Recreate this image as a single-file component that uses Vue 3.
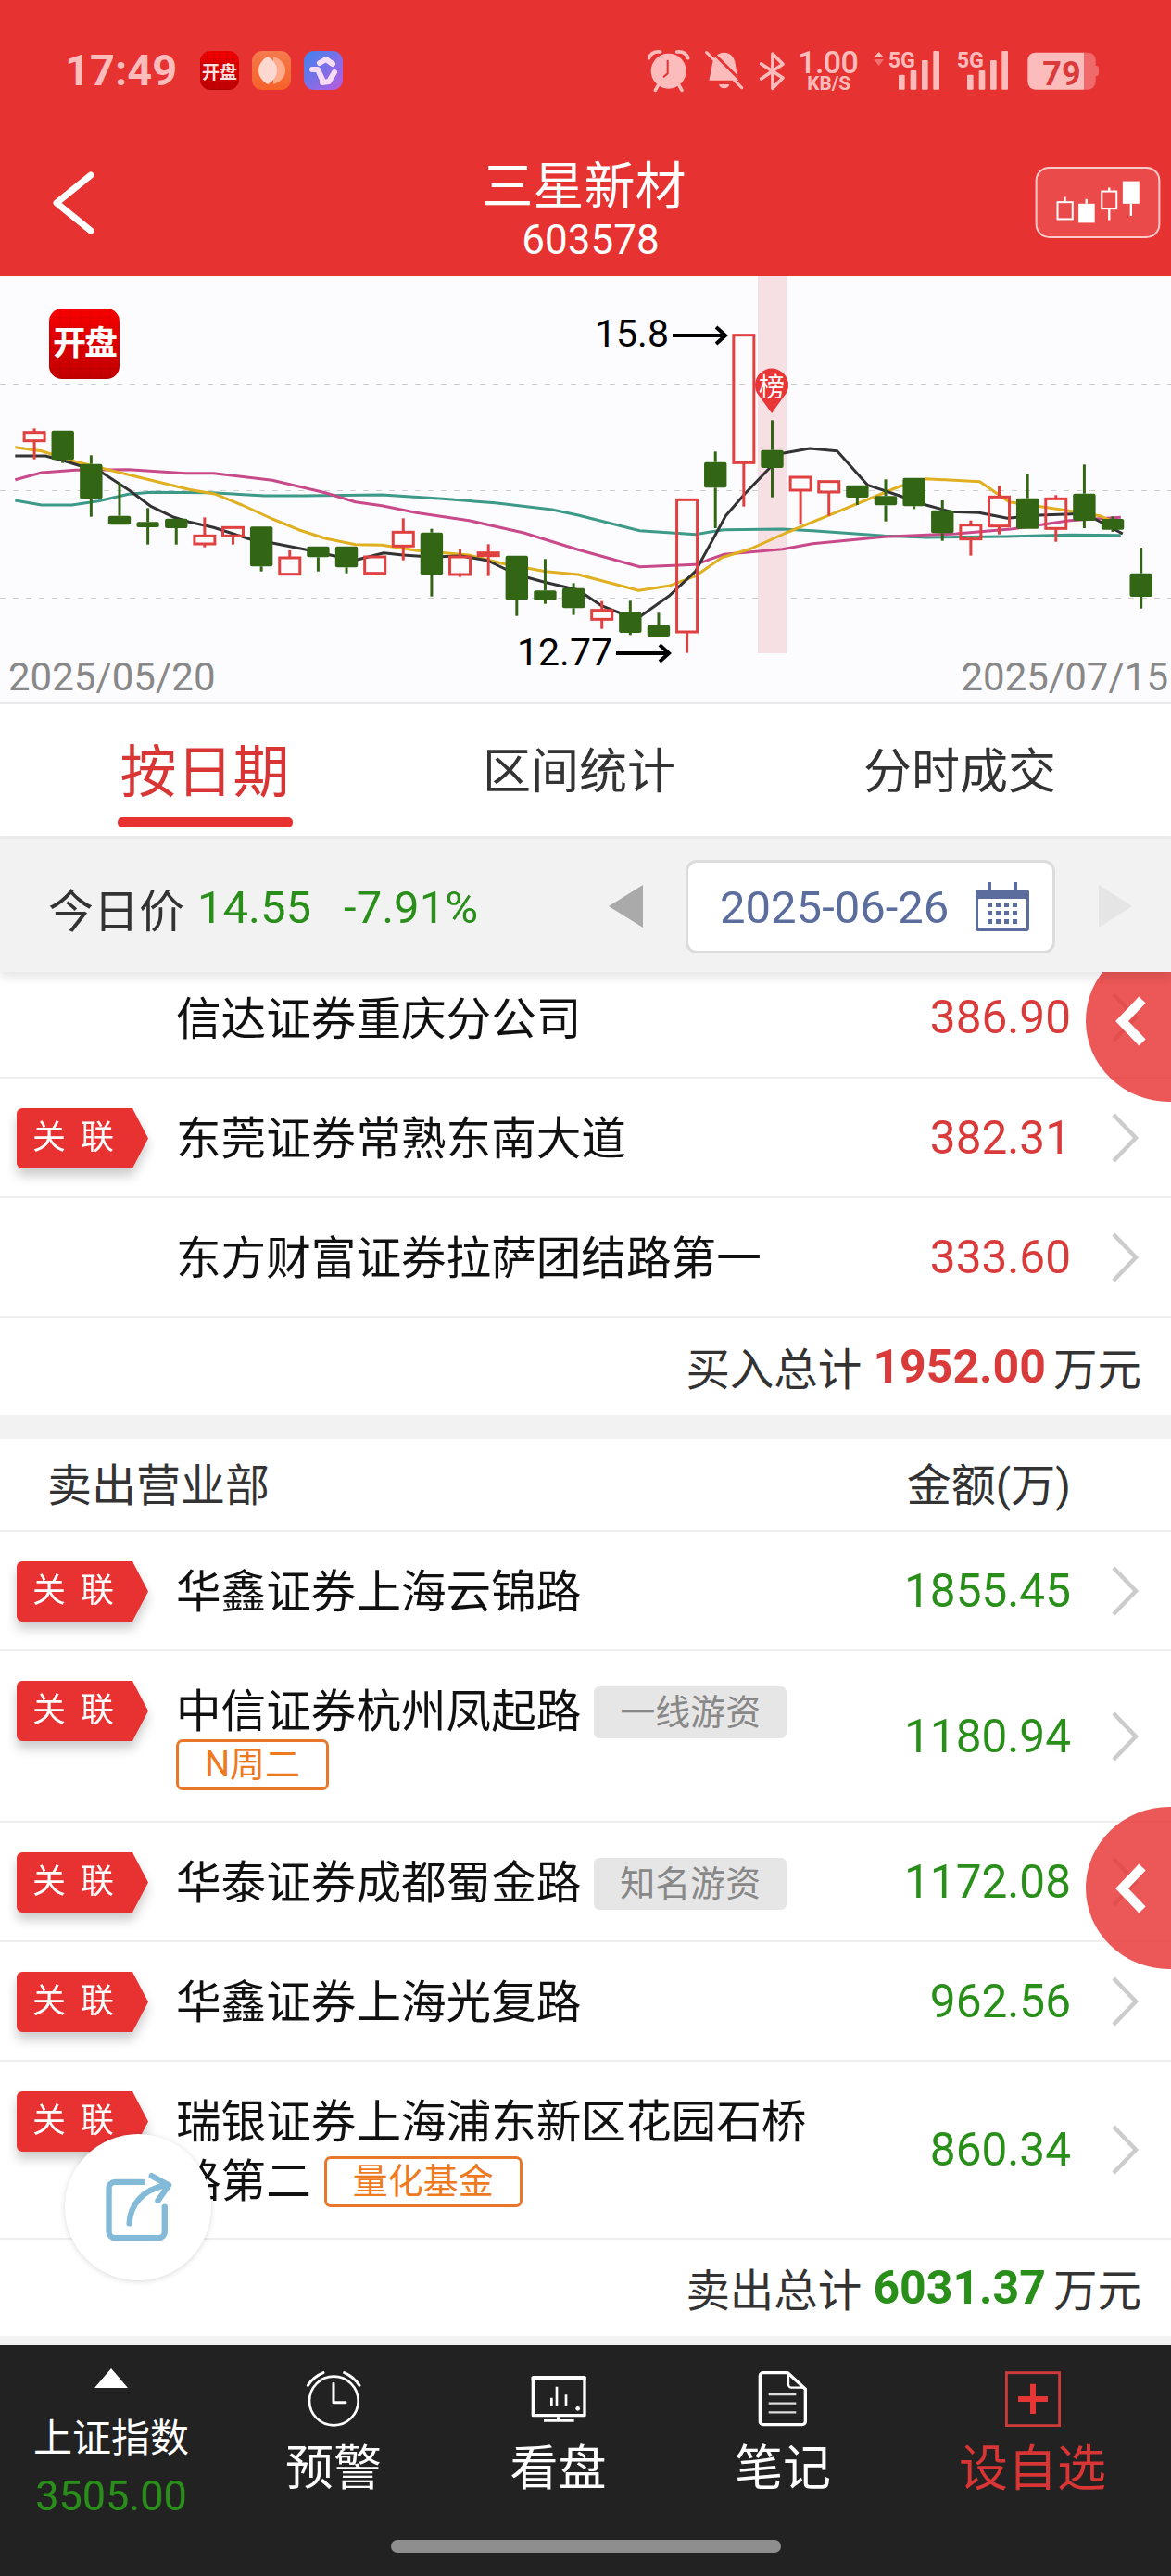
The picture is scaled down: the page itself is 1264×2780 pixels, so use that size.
<template>
  <div class="page">
    <header class="top">
      <div class="status">
        <div class="status-left">
          <span class="time">17:49</span>
          <span class="app app-open">开盘</span>
          <span class="app app-orange">
            <svg width="42" height="42" viewBox="0 0 42 42">
              <path d="M23 6c9 3 13 9 13 15s-4 12-13 15z" fill="#ffab8c" />
              <path d="M17 6c7 4 10 10 10 15s-3 11-10 15c-7-4-10-10-10-15S10 10 17 6z" fill="#fdd8d0" />
            </svg>
          </span>
          <span class="app app-purple">
            <svg width="42" height="42" viewBox="0 0 42 42">
              <path d="M17 13l7-4 7 5M9 20h6l5 11M33 23l-6 10-7 1" fill="none" stroke="#f7dcf5" stroke-width="6" stroke-linecap="round" stroke-linejoin="round" />
            </svg>
          </span>
        </div>
        <svg class="status-right" width="510" height="70" viewBox="0 0 1530 210">
          <g fill="#fcbcbc">
            <circle cx="95" cy="110" r="57" />
            <path d="M32 68Q40 45 68 48M158 68Q150 45 122 48M62 155l-10 17M128 155l10 17" fill="none" stroke="#fcbcbc" stroke-width="11" stroke-linecap="round" />
            <path d="M275 50c24 0 36 20 38 48l9 42H226l9-42c2-28 16-48 40-48zM258 153h34q-4 13-17 13t-17-13z" />
          </g>
          <path d="M92 75v43l-14 12" fill="none" stroke="#e73232" stroke-width="6" />
          <path d="M227 39l114 114" stroke="#e73232" stroke-width="9" />
          <path d="M218 50l114 114" stroke="#fcbcbc" stroke-width="9" stroke-linecap="round" />
          <path d="M395 87l70 45-33 34V54l33 34-70 47" fill="none" stroke="#fcbcbc" stroke-width="11" stroke-linejoin="round" stroke-linecap="round" />
          <text x="611" y="118" class="st-speed">1.00</text>
          <text x="614" y="170" class="st-unit">KB/S</text>
          <path d="M776 48l16 17h-32z" fill="#fcbcbc" />
          <path d="M776 93l16-21h-32z" fill="#f07070" />
          <text x="806" y="98" class="st-5g">5G</text>
          <text x="1028" y="98" class="st-5g">5G</text>
          <g fill="#fcbcbc">
            <template v-for="off in [0, 222]" :key="off">
              <rect v-for="b in signalBars" :key="b.x" :x="b.x + off" :y="b.y" width="20" :height="170 - b.y" rx="3" />
            </template>
            <path d="M1440 50h-157a25 25 0 0 0-25 25v70a25 25 0 0 0 25 25h157z" />
          </g>
          <path d="M1440 50h13a25 25 0 0 1 25 25v18a10 10 0 0 1 10 10v14a10 10 0 0 1-10 10v18a25 25 0 0 1-25 25h-13z" fill="#ef6b6b" />
          <text x="1368" y="155" class="st-batt">79</text>
        </svg>
      </div>
      <div class="nav">
        <svg class="back" width="46" height="68" viewBox="0 0 46 68">
          <path d="M42 4L5 34l37 30" fill="none" stroke="#fff" stroke-width="7" stroke-linecap="round" stroke-linejoin="round" />
        </svg>
        <div class="title">
          <div class="name">三星新材</div>
          <div class="code">603578</div>
        </div>
        <svg class="kbtn" width="136" height="77" viewBox="52 30 406 232">
          <rect x="55" y="33" width="400" height="226" rx="42" fill="#eb4a4a" stroke="#fcc9c9" stroke-width="6" />
          <path d="M148 128v15M218 135v15M292 98v10M292 168v35M363 150v40" stroke="#fff" stroke-width="7" />
          <rect x="124" y="145" width="49" height="55" fill="none" stroke="#fff" stroke-width="6" />
          <rect x="192" y="150" width="53" height="62" fill="#fff" />
          <rect x="268" y="110" width="48" height="56" fill="none" stroke="#fff" stroke-width="6" />
          <rect x="336" y="77" width="54" height="73" fill="#fff" />
        </svg>
      </div>
    </header>

    <section class="chart">
      <svg class="kline" width="1264" height="462" viewBox="0 0 1264 462">
        <line v-for="g in gridLines" :key="g" x1="0" x2="1264" :y1="g" :y2="g" stroke="#cfcfcf" stroke-width="1" stroke-dasharray="6 8" />
        <rect x="818" y="0" width="31" height="407" fill="#f7e0e4" />
        <polyline v-for="m in maLines" :key="m.color" :points="m.points" fill="none" :stroke="m.color" stroke-width="3" stroke-linejoin="round" />
        <g v-for="c in candles" :key="c.i">
          <line :x1="c.x" :x2="c.x" :y1="c.wickTop" :y2="c.bodyTop" :stroke="c.color" stroke-width="3" />
          <line :x1="c.x" :x2="c.x" :y1="c.bodyBottom" :y2="c.wickBottom" :stroke="c.color" stroke-width="3" />
          <rect v-if="c.up" :x="c.x - 11" :y="c.bodyTop" width="22" :height="c.bodyBottom - c.bodyTop" fill="none" :stroke="c.color" stroke-width="3" />
          <rect v-else :x="c.x - 12.2" :y="c.bodyTop" width="24.4" :height="c.bodyBottom - c.bodyTop" rx="2" :fill="c.color" />
        </g>
        <text x="642" y="76" class="price">15.8</text>
        <path d="M726 64h56M773 55l10 9-10 9" fill="none" stroke="#000" stroke-width="4" />
        <text x="558" y="420" class="price">12.77</text>
        <path d="M665 407h56M712 398l10 9-10 9" fill="none" stroke="#000" stroke-width="4" />
        <path d="M833 148l-13-18a18 18 0 1 1 26 0z" fill="#e83535" />
        <text x="833" y="130" class="pin">榜</text>
        <text x="9" y="447" class="axis">2025/05/20</text>
        <text x="1261" y="447" class="axis end">2025/07/15</text>
      </svg>
      <div class="logo">开盘</div>
    </section>

    <nav class="tabs">
      <div v-for="(t, i) in tabs" :key="t" class="tab" :class="{ active: i === 0 }">
        <span>{{ t }}</span>
        <i v-if="i === 0"></i>
      </div>
    </nav>

    <div class="pricebar">
      <span class="label">今日价</span>
      <span class="green p1">14.55</span>
      <span class="green p2">-7.91%</span>
      <div class="picker">
        <i class="tri left"></i>
        <div class="datebox">
          <span>2025-06-26</span>
          <svg width="58" height="53" viewBox="0 0 58 53">
            <path d="M3 8h52a3 3 0 0 1 3 3v39a3 3 0 0 1-3 3H3a3 3 0 0 1-3-3V11a3 3 0 0 1 3-3z" fill="#5a6d9c" />
            <rect x="3" y="18" width="52" height="32" rx="1" fill="#fff" />
            <path d="M15 0v13M43 0v13" stroke="#5a6d9c" stroke-width="4" />
            <g fill="#5a6d9c">
              <template v-for="r in 3" :key="r">
                <rect v-for="q in 4" :key="q" :x="4 + q * 9" :y="13 + r * 9" width="5" height="5" />
              </template>
            </g>
          </svg>
        </div>
        <i class="tri right"></i>
      </div>
    </div>

    <main class="list">
      <div class="rows-clip">
        <div v-for="r in buyRows" :key="r.name" class="row">
          <div class="tagcol"><div v-if="r.linked" class="badge-wrap"><div class="badge">关 联</div></div></div>
          <div class="name-cell"><span class="bname">{{ r.name }}</span></div>
          <span class="amount red">{{ r.amount }}</span>
          <svg class="chev" width="34" height="54" viewBox="0 0 34 54"><path d="M5 2l24 25L5 52" fill="none" stroke="#cccccc" stroke-width="4.5" /></svg>
        </div>
      </div>
      <div class="total buy">买入总计<b class="red">1952.00</b>万元</div>
      <div class="gap"></div>

      <div class="list-head">
        <span>卖出营业部</span>
        <span>金额(万)</span>
      </div>
      <div v-for="r in sellRows" :key="r.name" class="row" :class="r.size">
        <div class="tagcol"><div class="badge-wrap"><div class="badge">关 联</div></div></div>
        <div class="name-cell">
          <span class="bname">{{ r.name }}</span>
          <span v-if="r.grey" class="tag-grey">{{ r.grey }}</span>
          <span v-if="r.orange" class="tag-orange">{{ r.orange }}</span>
        </div>
        <span class="amount green">{{ r.amount }}</span>
        <svg class="chev" width="34" height="54" viewBox="0 0 34 54"><path d="M5 2l24 25L5 52" fill="none" stroke="#cccccc" stroke-width="4.5" /></svg>
      </div>
      <div class="total sell">卖出总计<b class="green">6031.37</b>万元</div>
    </main>

    <footer class="bar">
      <div class="item index">
        <i class="up"></i>
        <span class="idx-name">上证指数</span>
        <span class="idx-num">3505.00</span>
      </div>
      <div class="item">
        <svg width="60" height="60" viewBox="93 42 180 180">
          <circle cx="184" cy="138" r="79" fill="none" stroke="#fff" stroke-width="8" />
          <path d="M183 82v61h39" fill="none" stroke="#fff" stroke-width="9" stroke-linecap="round" stroke-linejoin="round" />
          <path d="M100 88Q118 60 150 47M267 88Q248 60 218 47" fill="none" stroke="#fff" stroke-width="9" stroke-linecap="round" />
        </svg>
        <span>预警</span>
      </div>
      <div class="item">
        <svg width="60" height="60" viewBox="818 42 180 180">
          <path d="M825 62h167v123H825z" fill="none" stroke="#fff" stroke-width="10" stroke-linejoin="round" />
          <path d="M820 60h177v12H820zM902 190h12v10h-12zM860 198h98v8h-98z" fill="#fff" />
          <path d="M885 128v27M902 92v63M932 118v37" stroke="#fff" stroke-width="8" />
          <circle cx="970" cy="163" r="7" fill="#fff" />
        </svg>
        <span>看盘</span>
      </div>
      <div class="item">
        <svg width="60" height="60" viewBox="74 42 180 180">
          <path d="M100 47h80l57 53v105a10 10 0 0 1-10 10H100a10 10 0 0 1-10-10V57a10 10 0 0 1 10-10z" fill="none" stroke="#fff" stroke-width="10" stroke-linejoin="round" />
          <path d="M182 50v35a10 10 0 0 0 10 10h43" fill="none" stroke="#fff" stroke-width="7" />
          <path d="M118 117h89M118 146h89M118 175h89" stroke="#ddd" stroke-width="7" />
        </svg>
        <span>笔记</span>
      </div>
      <div class="item add">
        <svg width="60" height="60" viewBox="885 42 180 180">
          <rect x="889" y="47" width="172" height="171" fill="none" stroke="#cc3a3a" stroke-width="9" />
          <path d="M975 83v97M927 132h96" stroke="#e53535" stroke-width="18" />
        </svg>
        <span>设自选</span>
      </div>
      <i class="home"></i>
    </footer>

    <div class="fold fold-a"><svg width="38" height="56" viewBox="0 0 38 56"><path d="M31 5L9 28l22 23" fill="none" stroke="#fff" stroke-width="10" /></svg></div>
    <div class="fold fold-b"><svg width="38" height="56" viewBox="0 0 38 56"><path d="M31 5L9 28l22 23" fill="none" stroke="#fff" stroke-width="10" /></svg></div>

    <div class="share">
      <svg width="158" height="158" viewBox="30 10 472 472">
        <path d="M280 165H192a20 20 0 0 0-20 20v140a20 20 0 0 0 20 20h140a20 20 0 0 0 20-20v-80" fill="none" stroke="#83bad8" stroke-width="19" stroke-linecap="round" />
        <path d="M238 298c2-58 42-108 117-123M310 145l55 30-35 50" fill="none" stroke="#83bad8" stroke-width="19" stroke-linecap="round" stroke-linejoin="round" />
      </svg>
    </div>
  </div>
</template>

<script setup>
const tabs = ['按日期', '区间统计', '分时成交']

const signalBars = [
  { x: 840, y: 122 },
  { x: 878, y: 108 },
  { x: 915, y: 75 },
  { x: 952, y: 45 },
]

const gridLines = [116.5, 231.5, 347.5]

// values read off the reference: up, body top, body bottom, wick top, wick bottom (y in 3x)
const raw = [
  [1, 500, 527, 487, 587], [0, 494, 589, 494, 599], [0, 602, 715, 574, 773], [0, 770, 799, 665, 799],
  [0, 790, 807, 745, 863], [0, 779, 810, 779, 863], [1, 835, 861, 775, 872], [1, 808, 835, 808, 863],
  [0, 805, 934, 805, 950], [1, 906, 959, 882, 959], [0, 869, 904, 869, 950], [0, 869, 937, 869, 956],
  [1, 903, 956, 903, 961], [1, 823, 868, 778, 914], [0, 824, 961, 812, 1031], [1, 903, 960, 877, 968],
  [1, 890, 899, 862, 965], [0, 899, 1042, 899, 1094], [0, 1012, 1044, 910, 1055], [0, 1004, 1069, 988, 1091],
  [1, 1076, 1105, 1046, 1136], [0, 1082, 1149, 1045, 1156], [0, 1124, 1161, 1084, 1161], [1, 718, 1146, 718, 1214],
  [0, 596, 679, 562, 810], [1, 185, 598, 185, 740], [0, 557, 615, 460, 710], [1, 645, 687, 645, 795],
  [1, 659, 693, 659, 770], [0, 671, 711, 671, 735], [0, 706, 736, 652, 788], [0, 647, 739, 647, 748],
  [0, 752, 826, 720, 851], [1, 800, 845, 785, 899], [1, 709, 803, 673, 830], [0, 713, 812, 633, 812],
  [1, 715, 811, 703, 854], [0, 698, 786, 604, 810], [0, 780, 815, 772, 822], [0, 956, 1032, 873, 1070],
]

const toY = (z) => z / 3 + 2
const toX = (z) => z / 2.45

const candles = raw.map((c, i) => ({
  i,
  x: 37.1 + 30.63 * i,
  up: c[0] === 1,
  color: c[0] === 1 ? '#e04040' : '#336614',
  bodyTop: toY(c[1]),
  bodyBottom: toY(c[2]),
  wickTop: toY(c[3]),
  wickBottom: toY(c[4]),
}))

const line = (color, pts) => ({
  color,
  points: pts.map((p) => `${toX(p[0]).toFixed(1)},${toY(p[1]).toFixed(1)}`).join(' '),
})

const maLines = [
  line('#3d9a88', [[40, 720], [110, 735], [190, 735], [260, 722], [340, 700], [400, 694], [560, 695], [700, 705], [800, 705], [1010, 702], [1170, 715], [1310, 728], [1460, 750], [1529, 768], [1692, 818], [1839, 830], [1914, 815], [2069, 813], [2149, 818], [2339, 835], [2449, 840], [2659, 837], [2829, 832], [2964, 833]]),
  line('#c84a8a', [[40, 653], [110, 630], [200, 622], [340, 620], [490, 632], [565, 632], [720, 655], [860, 695], [940, 725], [1010, 737], [1100, 760], [1240, 785], [1385, 825], [1529, 880], [1692, 935], [1839, 928], [1914, 895], [2069, 878], [2149, 860], [2339, 838], [2529, 828], [2679, 812], [2829, 785], [2964, 775]]),
  line('#e0b020', [[40, 548], [110, 560], [200, 595], [350, 640], [500, 685], [570, 700], [640, 735], [720, 780], [790, 815], [860, 843], [940, 863], [1010, 865], [1100, 882], [1240, 897], [1330, 925], [1442, 950], [1529, 960], [1689, 1012], [1769, 997], [1839, 965], [1909, 905], [1989, 875], [2079, 825], [2189, 770], [2379, 675], [2449, 650], [2591, 659], [2669, 725], [2819, 752], [2909, 770], [2964, 800]]),
  line('#333333', [[40, 576], [120, 576], [165, 590], [270, 630], [345, 690], [400, 740], [460, 775], [500, 790], [565, 808], [660, 845], [720, 858], [810, 880], [885, 900], [945, 912], [1015, 890], [1065, 897], [1140, 903], [1220, 900], [1290, 915], [1366, 960], [1440, 985], [1529, 1010], [1589, 1060], [1667, 1098], [1694, 1095], [1769, 1030], [1839, 950], [1919, 770], [1969, 700], [2043, 605], [2069, 568], [2141, 552], [2214, 560], [2294, 670], [2379, 705], [2449, 735], [2514, 757], [2589, 760], [2664, 778], [2749, 768], [2869, 763], [2969, 828]]),
]

const buyRows = [
  { name: '信达证券重庆分公司', amount: '386.90', linked: false },
  { name: '东莞证券常熟东南大道', amount: '382.31', linked: true },
  { name: '东方财富证券拉萨团结路第一', amount: '333.60', linked: false },
]

const sellRows = [
  { name: '华鑫证券上海云锦路', amount: '1855.45' },
  { name: '中信证券杭州凤起路', amount: '1180.94', grey: '一线游资', orange: 'N周二', size: 'tall-a' },
  { name: '华泰证券成都蜀金路', amount: '1172.08', grey: '知名游资' },
  { name: '华鑫证券上海光复路', amount: '962.56' },
  { name: '瑞银证券上海浦东新区花园石桥路第二', amount: '860.34', orange: '量化基金', size: 'tall-b' },
]
</script>

<style>
html,
body {
  margin: 0;
  background: #fff;
}
</style>

<style scoped>
.page {
  position: relative;
  width: 1264px;
  height: 2780px;
  overflow: hidden;
  background: #fff;
  font-family: Roboto, "Noto Sans CJK SC", sans-serif;
  color: #333;
}

.top {
  height: 298px;
  background: #e73232;
  color: #fff;
}

.status {
  height: 166px;
  display: flex;
  justify-content: space-between;
  align-items: flex-start;
  padding: 54px 64px 0 70px;
  box-sizing: border-box;
  color: #fcbcbc;
}

.status-left {
  display: flex;
  align-items: center;
  height: 44px;
}

.time {
  width: 146px;
  font-size: 47px;
  font-weight: 700;
  line-height: 44px;
}

.app {
  width: 42px;
  height: 42px;
  margin-right: 14px;
  border-radius: 11px;
  overflow: hidden;
  display: flex;
  align-items: center;
  justify-content: center;
}

.app-open {
  background:
    repeating-linear-gradient(0deg, rgba(120, 0, 0, 0.25) 0 1px, transparent 1px 7px),
    repeating-linear-gradient(90deg, rgba(120, 0, 0, 0.25) 0 1px, transparent 1px 7px),
    linear-gradient(#f00000, #c00000);
  color: #fde0e0;
  font-size: 19px;
  font-weight: 700;
  white-space: nowrap;
}

.app-orange {
  background: linear-gradient(#f57a4c, #f6622a);
}

.app-purple {
  background: linear-gradient(135deg, #3e83ee, #b95ce0);
}

.status-right {
  margin-top: -14px;
}

.st-speed,
.st-unit,
.st-5g,
.st-batt {
  font-family: Roboto, sans-serif;
  text-anchor: middle;
  fill: #fcbcbc;
}

.st-speed {
  font-size: 102px;
  font-weight: 500;
  letter-spacing: -2px;
}

.st-unit {
  font-size: 62px;
  font-weight: 700;
}

.st-5g {
  font-size: 70px;
  font-weight: 700;
  text-anchor: start;
}

.st-batt {
  font-size: 108px;
  font-weight: 700;
  fill: #d93a3a;
}

.nav {
  display: grid;
  grid-template-columns: 1fr auto 1fr;
  padding: 0 11px 0 56px;
}

.back {
  margin-top: 19px;
}

.title {
  text-align: center;
}

.name {
  padding-top: 3px;
  font-size: 55px;
  line-height: 64px;
  transform: translateX(-24px);
}

.code {
  font-size: 44px;
  line-height: 52px;
  transform: translateX(-17px);
}

.kbtn {
  justify-self: end;
  margin-top: 14px;
}

.chart {
  position: relative;
  height: 462px;
  background: #fcfcff;
  border-bottom: 2px solid #e9e9e9;
  box-sizing: border-box;
}

.kline {
  display: block;
}

.price {
  font-family: Roboto, sans-serif;
  font-size: 41px;
  fill: #000;
}

.pin {
  font-family: "Noto Sans CJK SC", sans-serif;
  font-size: 28px;
  fill: #fff;
  text-anchor: middle;
}

.axis {
  font-family: Roboto, sans-serif;
  font-size: 42px;
  fill: #888;
}

.axis.end {
  text-anchor: end;
}

.logo {
  position: absolute;
  left: 53px;
  top: 35px;
  width: 76px;
  height: 76px;
  border-radius: 14px;
  background:
    repeating-linear-gradient(0deg, rgba(120, 0, 0, 0.15) 0 1px, transparent 1px 11px),
    repeating-linear-gradient(90deg, rgba(120, 0, 0, 0.15) 0 1px, transparent 1px 11px),
    linear-gradient(#f80000, #c20000);
  color: #fff;
  font-size: 36px;
  font-weight: 700;
  letter-spacing: -2px;
  line-height: 76px;
  text-align: center;
  white-space: nowrap;
}

.tabs {
  display: grid;
  grid-template-columns: 442px 366px 456px;
  height: 145px;
  padding-top: 38px;
  box-sizing: border-box;
  border-bottom: 3px solid #ececec;
}

.tab {
  display: flex;
  flex-direction: column;
  align-items: center;
  font-size: 52px;
  line-height: 72px;
}

.tab.active {
  color: #d93535;
  font-size: 61px;
}

.tab.active i {
  width: 189px;
  height: 11px;
  margin-top: 12px;
  border-radius: 5px;
  background: #e83232;
}

.pricebar {
  position: relative;
  z-index: 3;
  height: 144px;
  display: flex;
  align-items: center;
  padding: 2px 42px 0 52px;
  box-sizing: border-box;
  background: #f2f2f2;
  box-shadow: 0 6px 10px rgba(0, 0, 0, 0.1);
}

.label {
  font-size: 49px;
  padding-top: 2px;
}

.green {
  color: #2a8f1a;
}

.red {
  color: #d93a3a;
}

.p1 {
  margin-left: 14px;
  font-size: 49px;
  padding-top: 2px;
}

.p2 {
  margin-left: 35px;
  font-size: 49px;
  padding-top: 2px;
}

.picker {
  margin-left: auto;
  display: flex;
  align-items: center;
}

.tri {
  width: 0;
  height: 0;
  border-top: 23px solid transparent;
  border-bottom: 23px solid transparent;
}

.tri.left {
  border-right: 37px solid #aaa;
}

.tri.right {
  border-left: 36px solid #e5e5e5;
}

.datebox {
  width: 399px;
  height: 101px;
  margin: 0 47px 0 46px;
  padding: 0 25px 0 34px;
  box-sizing: border-box;
  border: 3px solid #dcdcdc;
  border-radius: 12px;
  background: #fff;
  color: #5a6d9c;
  font-size: 49px;
  display: flex;
  align-items: center;
  justify-content: space-between;
}

.datebox span {
  padding-top: 3px;
}

.rows-clip {
  margin-top: -15px;
}

.list {
  height: 1482px;
  overflow: hidden;
}

.row {
  position: relative;
  height: 129px;
  display: flex;
  align-items: center;
  border-bottom: 2px solid #eeeeee;
  box-sizing: border-box;
  padding-right: 33px;
}

.row.tall-a {
  height: 185px;
}

.row.tall-b {
  height: 192px;
}

.rows-clip .row:first-child {
  height: 130px;
}

.tagcol {
  width: 190px;
  flex: none;
  align-self: flex-start;
  padding: 32px 0 0 18px;
  box-sizing: border-box;
}

.badge-wrap {
  width: 142px;
  filter: drop-shadow(0 8px 6px rgba(0, 0, 0, 0.2));
}

.badge {
  height: 65px;
  border-radius: 6px 0 0 6px;
  background: #e83232;
  color: #fff;
  font-size: 36px;
  word-spacing: 7px;
  line-height: 65px;
  text-align: center;
  padding-right: 20px;
  box-sizing: border-box;
  clip-path: polygon(0 0, 88% 0, 100% 50%, 88% 100%, 0 100%);
}

.name-cell {
  width: 700px;
  padding-top: 5px;
  font-size: 48.6px;
  line-height: 64px;
  color: #111;
}

.tall-a .name-cell {
  line-height: 56px;
}

.tag-grey,
.tag-orange {
  display: inline-block;
  box-sizing: border-box;
  vertical-align: top;
  font-size: 38px;
  text-align: center;
  white-space: nowrap;
}

.tag-grey {
  width: 208px;
  height: 56px;
  margin-left: 14px;
  border-radius: 6px;
  background: #e6e6e6;
  color: #888;
  line-height: 56px;
  margin-top: 4px;
}

.tall-a .tag-grey {
  margin-top: 0;
}

.tag-orange {
  height: 55px;
  padding: 0 28px;
  border: 3px solid #e8772a;
  border-radius: 7px;
  color: #ee7a1f;
  line-height: 49px;
  margin-top: 4px;
  margin-left: 14px;
}

.tall-a .tag-orange {
  margin-left: 0;
  margin-top: 1px;
  width: 165px;
  padding: 0;
}

.amount {
  margin-left: auto;
  font-size: 49.5px;
  line-height: 64px;
}

.chev {
  margin-left: 41px;
  flex: none;
}

.total {
  height: 105px;
  padding-right: 32px;
  display: flex;
  align-items: center;
  justify-content: flex-end;
  font-size: 47.5px;
}

.total.sell {
  height: 103px;
}

.total b {
  margin: 0 8px 0 12px;
  font-size: 50px;
  font-weight: 700;
}

.gap {
  height: 26px;
  background: #f2f2f2;
}

.list-head {
  height: 100px;
  padding: 0 108px 6px 51px;
  display: flex;
  align-items: center;
  justify-content: space-between;
  border-bottom: 2px solid #eeeeee;
  box-sizing: border-box;
  font-size: 48px;
}

.bar {
  position: absolute;
  left: 0;
  top: 2531px;
  width: 1264px;
  height: 249px;
  display: grid;
  grid-template-columns: 240px 240px 245px 240px 299px;
  background: #222;
  box-shadow: 0 -10px 0 #f2f2f2;
}

.item {
  display: flex;
  flex-direction: column;
  align-items: center;
  padding-top: 28px;
  color: #fff;
  font-size: 52px;
  line-height: 60px;
}

.item span {
  margin-top: 16px;
}

.item.add {
  color: #d93535;
  font-size: 53px;
}

.item.index {
  padding-top: 25px;
  font-size: 42px;
  line-height: 50px;
}

.up {
  width: 0;
  height: 0;
  border-left: 18px solid transparent;
  border-right: 18px solid transparent;
  border-bottom: 21px solid #fff;
}

.item .idx-name {
  margin-top: 30px;
}

.item .idx-num {
  margin-top: 12px;
  color: #2a8f1a;
  font-size: 45px;
}

.home {
  position: absolute;
  left: 422px;
  top: 210px;
  width: 421px;
  height: 14px;
  border-radius: 7px;
  background: #8e8e8e;
}

.fold {
  position: absolute;
  left: 1172px;
  width: 180px;
  height: 175px;
  border-radius: 50%;
  background: rgba(232, 50, 50, 0.82);
  display: flex;
  align-items: center;
  padding-left: 30px;
  box-sizing: border-box;
}

.fold-a {
  top: 1014px;
  z-index: 2;
}

.fold-b {
  top: 1950px;
}

.share {
  position: absolute;
  left: 70px;
  top: 2303px;
  width: 158px;
  height: 158px;
  border-radius: 50%;
  background: #fff;
  box-shadow: 0 1px 6px rgba(0, 0, 0, 0.15);
}

.share svg {
  display: block;
}
</style>
